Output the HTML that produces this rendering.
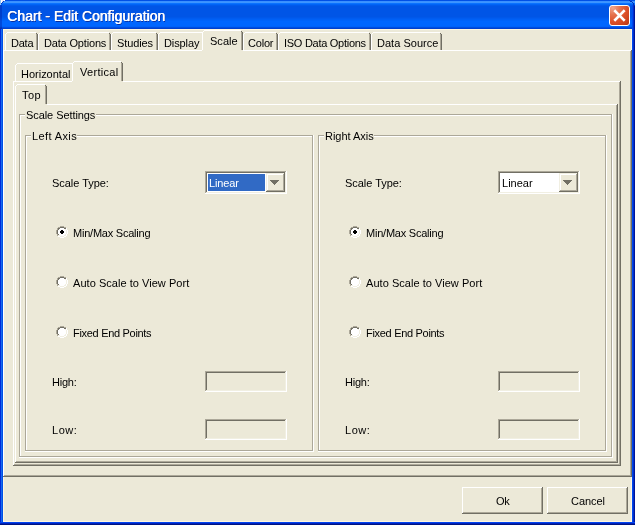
<!DOCTYPE html>
<html><head><meta charset="utf-8"><style>
html,body{margin:0;padding:0;width:635px;height:525px;overflow:hidden;background:#0050E6;}
div,span,svg{position:absolute;}
.t{font-family:"Liberation Sans",sans-serif;white-space:nowrap;line-height:13px;will-change:transform;}
.title{left:0;top:0;width:635px;height:29px;
background:linear-gradient(to bottom,#0050E6 0px,#0050E6 1px,#3A90FE 1px,#3A90FE 2px,#3D95FF 2px,#3D95FF 3px,#0A72FF 3px,#0A72FF 4px,#0064F6 4px,#0064F6 5px,#005AEC 5px,#005AEC 6px,#0055E6 6px,#0055E6 7px,#0055E6 7px,#0055E6 8px,#0055E6 8px,#0055E6 9px,#0055E6 9px,#0055E6 10px,#0055E6 10px,#0055E6 11px,#0055E6 11px,#0055E6 12px,#0055E6 12px,#0055E6 13px,#0055E6 13px,#0055E6 14px,#0055E6 14px,#0055E6 15px,#0055E6 15px,#0055E6 16px,#0055E6 16px,#0055E6 17px,#0058EA 17px,#0058EA 18px,#005CF0 18px,#005CF0 19px,#0060F5 19px,#0060F5 20px,#0063FA 20px,#0063FA 21px,#0066FF 21px,#0066FF 22px,#0066FF 22px,#0066FF 23px,#0066FF 23px,#0066FF 24px,#0066FF 24px,#0066FF 25px,#0066FF 25px,#0066FF 26px,#0062FA 26px,#0062FA 27px,#004EE0 27px,#004EE0 28px,#0040CF 28px,#0040CF 29px);}
.close{left:609px;top:5px;width:19px;height:19px;border:1px solid #fff;border-radius:3px;
background:radial-gradient(circle at 15% 10%,#F0A58C 0,#E5714C 30%,#DC5028 60%,#C8401A 85%,#B5350F 100%);}
.close svg{left:-1px;top:-1px;}
</style></head><body>
<div class="title"></div>
<div style="left:0px;top:5px;width:2px;height:24px;background:rgba(0,20,150,0.35);"></div>
<div style="left:0px;top:29px;width:3px;height:496px;background:linear-gradient(to right,#0029D8 0,#0029D8 1px,#166AEE 1px,#166AEE 2px,#0050E6 2px);"></div>
<div style="left:632px;top:5px;width:3px;height:520px;background:linear-gradient(to right,#0048F0 0,#0048F0 1px,#0030C8 1px,#0030C8 2px,#00139A 2px);"></div>
<div style="left:0px;top:0px;width:1px;height:1px;background:#8EC2F5;"></div>
<div style="left:1px;top:0px;width:1px;height:1px;background:#FFFFFF;"></div>
<div style="left:2px;top:0px;width:1px;height:1px;background:#F4E4F4;"></div>
<div style="left:3px;top:0px;width:1px;height:1px;background:#DDEEFF;"></div>
<div style="left:4px;top:0px;width:1px;height:1px;background:#FFFFFF;"></div>
<div style="left:0px;top:1px;width:1px;height:1px;background:#8EC2F5;"></div>
<div style="left:1px;top:1px;width:1px;height:1px;background:#FFFFFF;"></div>
<div style="left:2px;top:1px;width:1px;height:1px;background:#C8D8F8;"></div>
<div style="left:0px;top:2px;width:1px;height:1px;background:#8EC2F5;"></div>
<div style="left:1px;top:2px;width:1px;height:1px;background:#FFFFFF;"></div>
<div style="left:0px;top:3px;width:1px;height:1px;background:#8EC2F5;"></div>
<div style="left:0px;top:4px;width:1px;height:1px;background:#8EC2F5;"></div>
<div style="left:2px;top:2px;width:1px;height:1px;background:#0035C8;"></div>
<div style="left:3px;top:1px;width:1px;height:1px;background:#0035C8;"></div>
<div style="left:1px;top:3px;width:1px;height:1px;background:#0035C8;"></div>
<div style="left:5px;top:0px;width:1px;height:1px;background:#0040D8;"></div>
<div style="left:0px;top:5px;width:1px;height:1px;background:#0040D8;"></div>
<div style="left:629px;top:0px;width:1px;height:1px;background:#0030B8;"></div>
<div style="left:630px;top:1px;width:1px;height:1px;background:#0030B8;"></div>
<div style="left:631px;top:1px;width:1px;height:1px;background:#0030B8;"></div>
<div style="left:632px;top:2px;width:1px;height:1px;background:#0030B8;"></div>
<div style="left:633px;top:3px;width:1px;height:1px;background:#0030B8;"></div>
<div style="left:633px;top:4px;width:1px;height:1px;background:#0030B8;"></div>
<div style="left:634px;top:5px;width:1px;height:1px;background:#0030B8;"></div>
<div style="left:0px;top:522px;width:635px;height:3px;background:linear-gradient(to bottom,#0044F0 0,#0044F0 1px,#0022BB 1px,#0022BB 2px,#001480 2px);"></div>
<div style="left:3px;top:29px;width:629px;height:493px;background:#ECE9D8;"></div>
<div style="left:3px;top:29px;width:629px;height:1px;background:#FFF6DF;"></div>
<div style="left:3px;top:521px;width:629px;height:1px;background:#FFF6DF;"></div>
<div style="left:3px;top:29px;width:1px;height:493px;background:#FFF6DF;"></div>
<div style="left:631px;top:29px;width:1px;height:493px;background:#FFF6DF;"></div>
<div class="close"><svg width="21" height="21" viewBox="0 0 21 21"><path d="M6.2 6.2 L14.8 14.8 M14.8 6.2 L6.2 14.8" stroke="#fff" stroke-width="2.6" stroke-linecap="square"/></svg></div>
<div style="left:3px;top:50px;width:629px;height:1px;background:#FFFFFF;"></div>
<div style="left:3px;top:50px;width:1px;height:427px;background:#FFFFFF;"></div>
<div style="left:4px;top:475px;width:627px;height:1px;background:#ACA899;"></div>
<div style="left:3px;top:476px;width:629px;height:1px;background:#716F64;"></div>
<div style="left:630px;top:51px;width:1px;height:425px;background:#ACA899;"></div>
<div style="left:631px;top:50px;width:1px;height:427px;background:#716F64;"></div>
<div style="left:5px;top:32px;width:33px;height:18px;background:#ECE9D8;"></div>
<div style="left:7px;top:32px;width:29px;height:1px;background:#FFFFFF;"></div>
<div style="left:6px;top:33px;width:1px;height:1px;background:#FFFFFF;"></div>
<div style="left:5px;top:34px;width:1px;height:16px;background:#FFFFFF;"></div>
<div style="left:36px;top:33px;width:1px;height:1px;background:#716F64;"></div>
<div style="left:36px;top:34px;width:1px;height:16px;background:#ACA899;"></div>
<div style="left:37px;top:34px;width:1px;height:16px;background:#716F64;"></div>
<div style="left:38px;top:32px;width:73px;height:18px;background:#ECE9D8;"></div>
<div style="left:40px;top:32px;width:69px;height:1px;background:#FFFFFF;"></div>
<div style="left:39px;top:33px;width:1px;height:1px;background:#FFFFFF;"></div>
<div style="left:38px;top:34px;width:1px;height:16px;background:#FFFFFF;"></div>
<div style="left:109px;top:33px;width:1px;height:1px;background:#716F64;"></div>
<div style="left:109px;top:34px;width:1px;height:16px;background:#ACA899;"></div>
<div style="left:110px;top:34px;width:1px;height:16px;background:#716F64;"></div>
<div style="left:111px;top:32px;width:47px;height:18px;background:#ECE9D8;"></div>
<div style="left:113px;top:32px;width:43px;height:1px;background:#FFFFFF;"></div>
<div style="left:112px;top:33px;width:1px;height:1px;background:#FFFFFF;"></div>
<div style="left:111px;top:34px;width:1px;height:16px;background:#FFFFFF;"></div>
<div style="left:156px;top:33px;width:1px;height:1px;background:#716F64;"></div>
<div style="left:156px;top:34px;width:1px;height:16px;background:#ACA899;"></div>
<div style="left:157px;top:34px;width:1px;height:16px;background:#716F64;"></div>
<div style="left:158px;top:32px;width:44px;height:18px;background:#ECE9D8;"></div>
<div style="left:160px;top:32px;width:42px;height:1px;background:#FFFFFF;"></div>
<div style="left:159px;top:33px;width:1px;height:1px;background:#FFFFFF;"></div>
<div style="left:158px;top:34px;width:1px;height:16px;background:#FFFFFF;"></div>
<div style="left:243px;top:32px;width:35px;height:18px;background:#ECE9D8;"></div>
<div style="left:245px;top:32px;width:31px;height:1px;background:#FFFFFF;"></div>
<div style="left:244px;top:33px;width:1px;height:1px;background:#FFFFFF;"></div>
<div style="left:243px;top:34px;width:1px;height:16px;background:#FFFFFF;"></div>
<div style="left:276px;top:33px;width:1px;height:1px;background:#716F64;"></div>
<div style="left:276px;top:34px;width:1px;height:16px;background:#ACA899;"></div>
<div style="left:277px;top:34px;width:1px;height:16px;background:#716F64;"></div>
<div style="left:278px;top:32px;width:93px;height:18px;background:#ECE9D8;"></div>
<div style="left:280px;top:32px;width:89px;height:1px;background:#FFFFFF;"></div>
<div style="left:279px;top:33px;width:1px;height:1px;background:#FFFFFF;"></div>
<div style="left:278px;top:34px;width:1px;height:16px;background:#FFFFFF;"></div>
<div style="left:369px;top:33px;width:1px;height:1px;background:#716F64;"></div>
<div style="left:369px;top:34px;width:1px;height:16px;background:#ACA899;"></div>
<div style="left:370px;top:34px;width:1px;height:16px;background:#716F64;"></div>
<div style="left:371px;top:32px;width:71px;height:18px;background:#ECE9D8;"></div>
<div style="left:373px;top:32px;width:67px;height:1px;background:#FFFFFF;"></div>
<div style="left:372px;top:33px;width:1px;height:1px;background:#FFFFFF;"></div>
<div style="left:371px;top:34px;width:1px;height:16px;background:#FFFFFF;"></div>
<div style="left:440px;top:33px;width:1px;height:1px;background:#716F64;"></div>
<div style="left:440px;top:34px;width:1px;height:16px;background:#ACA899;"></div>
<div style="left:441px;top:34px;width:1px;height:16px;background:#716F64;"></div>
<div style="left:202px;top:30px;width:41px;height:21px;background:#ECE9D8;"></div>
<div style="left:204px;top:30px;width:37px;height:1px;background:#FFFFFF;"></div>
<div style="left:203px;top:31px;width:1px;height:1px;background:#FFFFFF;"></div>
<div style="left:202px;top:32px;width:1px;height:18px;background:#FFFFFF;"></div>
<div style="left:241px;top:31px;width:1px;height:1px;background:#716F64;"></div>
<div style="left:241px;top:32px;width:1px;height:18px;background:#ACA899;"></div>
<div style="left:242px;top:32px;width:1px;height:18px;background:#716F64;"></div>
<div style="left:13px;top:81px;width:608px;height:1px;background:#FFFFFF;"></div>
<div style="left:13px;top:81px;width:1px;height:385px;background:#FFFFFF;"></div>
<div style="left:14px;top:464px;width:606px;height:1px;background:#ACA899;"></div>
<div style="left:13px;top:465px;width:608px;height:1px;background:#716F64;"></div>
<div style="left:619px;top:82px;width:1px;height:383px;background:#ACA899;"></div>
<div style="left:620px;top:81px;width:1px;height:385px;background:#716F64;"></div>
<div style="left:15px;top:63px;width:57px;height:18px;background:#ECE9D8;"></div>
<div style="left:17px;top:63px;width:55px;height:1px;background:#FFFFFF;"></div>
<div style="left:16px;top:64px;width:1px;height:1px;background:#FFFFFF;"></div>
<div style="left:15px;top:65px;width:1px;height:16px;background:#FFFFFF;"></div>
<div style="left:72px;top:61px;width:51px;height:21px;background:#ECE9D8;"></div>
<div style="left:74px;top:61px;width:47px;height:1px;background:#FFFFFF;"></div>
<div style="left:73px;top:62px;width:1px;height:1px;background:#FFFFFF;"></div>
<div style="left:72px;top:63px;width:1px;height:18px;background:#FFFFFF;"></div>
<div style="left:121px;top:62px;width:1px;height:1px;background:#716F64;"></div>
<div style="left:121px;top:63px;width:1px;height:18px;background:#ACA899;"></div>
<div style="left:122px;top:63px;width:1px;height:18px;background:#716F64;"></div>
<div style="left:15px;top:104px;width:603px;height:1px;background:#FFFFFF;"></div>
<div style="left:15px;top:104px;width:1px;height:359px;background:#FFFFFF;"></div>
<div style="left:16px;top:461px;width:601px;height:1px;background:#ACA899;"></div>
<div style="left:15px;top:462px;width:603px;height:1px;background:#716F64;"></div>
<div style="left:616px;top:105px;width:1px;height:357px;background:#ACA899;"></div>
<div style="left:617px;top:104px;width:1px;height:359px;background:#716F64;"></div>
<div style="left:15px;top:84px;width:32px;height:21px;background:#ECE9D8;"></div>
<div style="left:17px;top:84px;width:28px;height:1px;background:#FFFFFF;"></div>
<div style="left:16px;top:85px;width:1px;height:1px;background:#FFFFFF;"></div>
<div style="left:15px;top:86px;width:1px;height:18px;background:#FFFFFF;"></div>
<div style="left:45px;top:85px;width:1px;height:1px;background:#716F64;"></div>
<div style="left:45px;top:86px;width:1px;height:18px;background:#ACA899;"></div>
<div style="left:46px;top:86px;width:1px;height:18px;background:#716F64;"></div>
<div style="left:15px;top:104px;width:1px;height:1px;background:#FFFFFF;"></div>
<div style="left:20px;top:115px;width:5px;height:1px;background:#FFFFFF;"></div>
<div style="left:96px;top:115px;width:515px;height:1px;background:#FFFFFF;"></div>
<div style="left:20px;top:115px;width:1px;height:341px;background:#FFFFFF;"></div>
<div style="left:19px;top:457px;width:594px;height:1px;background:#FFFFFF;"></div>
<div style="left:612px;top:114px;width:1px;height:344px;background:#FFFFFF;"></div>
<div style="left:19px;top:114px;width:6px;height:1px;background:#ACA899;"></div>
<div style="left:96px;top:114px;width:516px;height:1px;background:#ACA899;"></div>
<div style="left:19px;top:114px;width:1px;height:343px;background:#ACA899;"></div>
<div style="left:19px;top:456px;width:593px;height:1px;background:#ACA899;"></div>
<div style="left:611px;top:114px;width:1px;height:343px;background:#ACA899;"></div>
<div style="left:26px;top:136px;width:5px;height:1px;background:#FFFFFF;"></div>
<div style="left:77px;top:136px;width:235px;height:1px;background:#FFFFFF;"></div>
<div style="left:26px;top:136px;width:1px;height:314px;background:#FFFFFF;"></div>
<div style="left:25px;top:451px;width:289px;height:1px;background:#FFFFFF;"></div>
<div style="left:313px;top:135px;width:1px;height:317px;background:#FFFFFF;"></div>
<div style="left:25px;top:135px;width:6px;height:1px;background:#ACA899;"></div>
<div style="left:77px;top:135px;width:236px;height:1px;background:#ACA899;"></div>
<div style="left:25px;top:135px;width:1px;height:316px;background:#ACA899;"></div>
<div style="left:25px;top:450px;width:288px;height:1px;background:#ACA899;"></div>
<div style="left:312px;top:135px;width:1px;height:316px;background:#ACA899;"></div>
<div style="left:319px;top:136px;width:5px;height:1px;background:#FFFFFF;"></div>
<div style="left:374px;top:136px;width:231px;height:1px;background:#FFFFFF;"></div>
<div style="left:319px;top:136px;width:1px;height:314px;background:#FFFFFF;"></div>
<div style="left:318px;top:451px;width:289px;height:1px;background:#FFFFFF;"></div>
<div style="left:606px;top:135px;width:1px;height:317px;background:#FFFFFF;"></div>
<div style="left:318px;top:135px;width:6px;height:1px;background:#ACA899;"></div>
<div style="left:374px;top:135px;width:232px;height:1px;background:#ACA899;"></div>
<div style="left:318px;top:135px;width:1px;height:316px;background:#ACA899;"></div>
<div style="left:318px;top:450px;width:288px;height:1px;background:#ACA899;"></div>
<div style="left:605px;top:135px;width:1px;height:316px;background:#ACA899;"></div>
<span class="t" style="left:51.76px;top:177px;font-size:11px;font-weight:normal;color:#000;letter-spacing:-0.036px">Scale Type:</span>
<div style="left:205px;top:171px;width:82px;height:23px;background:#FFFFFF;"></div>
<div style="left:205px;top:171px;width:81px;height:1px;background:#ACA899;"></div>
<div style="left:205px;top:171px;width:1px;height:22px;background:#ACA899;"></div>
<div style="left:206px;top:172px;width:79px;height:1px;background:#716F64;"></div>
<div style="left:206px;top:172px;width:1px;height:20px;background:#716F64;"></div>
<div style="left:205px;top:193px;width:82px;height:1px;background:#FFFFFF;"></div>
<div style="left:286px;top:171px;width:1px;height:23px;background:#FFFFFF;"></div>
<div style="left:206px;top:192px;width:80px;height:1px;background:#F1EFE2;"></div>
<div style="left:285px;top:172px;width:1px;height:21px;background:#F1EFE2;"></div>
<div style="left:208px;top:174px;width:57px;height:17px;background:#316AC5;"></div>
<span class="t" style="left:208.75px;top:177px;font-size:11px;font-weight:normal;color:#fff;letter-spacing:-0.115px">Linear</span>
<div style="left:266px;top:173px;width:19px;height:19px;background:#ECE9D8;"></div>
<div style="left:266px;top:173px;width:18px;height:1px;background:#F1EFE2;"></div>
<div style="left:266px;top:173px;width:1px;height:18px;background:#F1EFE2;"></div>
<div style="left:267px;top:174px;width:16px;height:1px;background:#FFFFFF;"></div>
<div style="left:267px;top:174px;width:1px;height:16px;background:#FFFFFF;"></div>
<div style="left:267px;top:190px;width:17px;height:1px;background:#ACA899;"></div>
<div style="left:283px;top:174px;width:1px;height:17px;background:#ACA899;"></div>
<div style="left:266px;top:191px;width:19px;height:1px;background:#716F64;"></div>
<div style="left:284px;top:173px;width:1px;height:19px;background:#716F64;"></div>
<div style="left:270px;top:180px;width:9px;height:1px;background:#716F64;"></div>
<div style="left:271px;top:181px;width:7px;height:1px;background:#716F64;"></div>
<div style="left:272px;top:182px;width:5px;height:1px;background:#716F64;"></div>
<div style="left:273px;top:183px;width:3px;height:1px;background:#716F64;"></div>
<div style="left:274px;top:184px;width:1px;height:1px;background:#716F64;"></div>
<svg style="position:absolute;left:56px;top:226px" width="12" height="12" shape-rendering="crispEdges"><rect x="4" y="0" width="1" height="1" fill="#ACA899"/><rect x="5" y="0" width="1" height="1" fill="#ACA899"/><rect x="6" y="0" width="1" height="1" fill="#ACA899"/><rect x="7" y="0" width="1" height="1" fill="#ACA899"/><rect x="2" y="1" width="1" height="1" fill="#ACA899"/><rect x="3" y="1" width="1" height="1" fill="#ACA899"/><rect x="4" y="1" width="1" height="1" fill="#716F64"/><rect x="5" y="1" width="1" height="1" fill="#716F64"/><rect x="6" y="1" width="1" height="1" fill="#716F64"/><rect x="7" y="1" width="1" height="1" fill="#716F64"/><rect x="8" y="1" width="1" height="1" fill="#ACA899"/><rect x="9" y="1" width="1" height="1" fill="#ACA899"/><rect x="1" y="2" width="1" height="1" fill="#ACA899"/><rect x="2" y="2" width="1" height="1" fill="#716F64"/><rect x="3" y="2" width="1" height="1" fill="#716F64"/><rect x="4" y="2" width="1" height="1" fill="#FFFFFF"/><rect x="5" y="2" width="1" height="1" fill="#FFFFFF"/><rect x="6" y="2" width="1" height="1" fill="#FFFFFF"/><rect x="7" y="2" width="1" height="1" fill="#FFFFFF"/><rect x="8" y="2" width="1" height="1" fill="#716F64"/><rect x="9" y="2" width="1" height="1" fill="#716F64"/><rect x="10" y="2" width="1" height="1" fill="#FFFFFF"/><rect x="1" y="3" width="1" height="1" fill="#ACA899"/><rect x="2" y="3" width="1" height="1" fill="#716F64"/><rect x="3" y="3" width="1" height="1" fill="#FFFFFF"/><rect x="4" y="3" width="1" height="1" fill="#FFFFFF"/><rect x="5" y="3" width="1" height="1" fill="#FFFFFF"/><rect x="6" y="3" width="1" height="1" fill="#FFFFFF"/><rect x="7" y="3" width="1" height="1" fill="#FFFFFF"/><rect x="8" y="3" width="1" height="1" fill="#FFFFFF"/><rect x="9" y="3" width="1" height="1" fill="#F1EFE2"/><rect x="10" y="3" width="1" height="1" fill="#FFFFFF"/><rect x="0" y="4" width="1" height="1" fill="#ACA899"/><rect x="1" y="4" width="1" height="1" fill="#716F64"/><rect x="2" y="4" width="1" height="1" fill="#FFFFFF"/><rect x="3" y="4" width="1" height="1" fill="#FFFFFF"/><rect x="4" y="4" width="1" height="1" fill="#FFFFFF"/><rect x="5" y="4" width="1" height="1" fill="#FFFFFF"/><rect x="6" y="4" width="1" height="1" fill="#FFFFFF"/><rect x="7" y="4" width="1" height="1" fill="#FFFFFF"/><rect x="8" y="4" width="1" height="1" fill="#FFFFFF"/><rect x="9" y="4" width="1" height="1" fill="#FFFFFF"/><rect x="10" y="4" width="1" height="1" fill="#F1EFE2"/><rect x="11" y="4" width="1" height="1" fill="#FFFFFF"/><rect x="0" y="5" width="1" height="1" fill="#ACA899"/><rect x="1" y="5" width="1" height="1" fill="#716F64"/><rect x="2" y="5" width="1" height="1" fill="#FFFFFF"/><rect x="3" y="5" width="1" height="1" fill="#FFFFFF"/><rect x="4" y="5" width="1" height="1" fill="#FFFFFF"/><rect x="5" y="5" width="1" height="1" fill="#FFFFFF"/><rect x="6" y="5" width="1" height="1" fill="#FFFFFF"/><rect x="7" y="5" width="1" height="1" fill="#FFFFFF"/><rect x="8" y="5" width="1" height="1" fill="#FFFFFF"/><rect x="9" y="5" width="1" height="1" fill="#FFFFFF"/><rect x="10" y="5" width="1" height="1" fill="#F1EFE2"/><rect x="11" y="5" width="1" height="1" fill="#FFFFFF"/><rect x="0" y="6" width="1" height="1" fill="#ACA899"/><rect x="1" y="6" width="1" height="1" fill="#716F64"/><rect x="2" y="6" width="1" height="1" fill="#FFFFFF"/><rect x="3" y="6" width="1" height="1" fill="#FFFFFF"/><rect x="4" y="6" width="1" height="1" fill="#FFFFFF"/><rect x="5" y="6" width="1" height="1" fill="#FFFFFF"/><rect x="6" y="6" width="1" height="1" fill="#FFFFFF"/><rect x="7" y="6" width="1" height="1" fill="#FFFFFF"/><rect x="8" y="6" width="1" height="1" fill="#FFFFFF"/><rect x="9" y="6" width="1" height="1" fill="#FFFFFF"/><rect x="10" y="6" width="1" height="1" fill="#F1EFE2"/><rect x="11" y="6" width="1" height="1" fill="#FFFFFF"/><rect x="0" y="7" width="1" height="1" fill="#ACA899"/><rect x="1" y="7" width="1" height="1" fill="#716F64"/><rect x="2" y="7" width="1" height="1" fill="#FFFFFF"/><rect x="3" y="7" width="1" height="1" fill="#FFFFFF"/><rect x="4" y="7" width="1" height="1" fill="#FFFFFF"/><rect x="5" y="7" width="1" height="1" fill="#FFFFFF"/><rect x="6" y="7" width="1" height="1" fill="#FFFFFF"/><rect x="7" y="7" width="1" height="1" fill="#FFFFFF"/><rect x="8" y="7" width="1" height="1" fill="#FFFFFF"/><rect x="9" y="7" width="1" height="1" fill="#FFFFFF"/><rect x="10" y="7" width="1" height="1" fill="#F1EFE2"/><rect x="11" y="7" width="1" height="1" fill="#FFFFFF"/><rect x="1" y="8" width="1" height="1" fill="#ACA899"/><rect x="2" y="8" width="1" height="1" fill="#716F64"/><rect x="3" y="8" width="1" height="1" fill="#FFFFFF"/><rect x="4" y="8" width="1" height="1" fill="#FFFFFF"/><rect x="5" y="8" width="1" height="1" fill="#FFFFFF"/><rect x="6" y="8" width="1" height="1" fill="#FFFFFF"/><rect x="7" y="8" width="1" height="1" fill="#FFFFFF"/><rect x="8" y="8" width="1" height="1" fill="#FFFFFF"/><rect x="9" y="8" width="1" height="1" fill="#F1EFE2"/><rect x="10" y="8" width="1" height="1" fill="#FFFFFF"/><rect x="1" y="9" width="1" height="1" fill="#ACA899"/><rect x="2" y="9" width="1" height="1" fill="#F1EFE2"/><rect x="3" y="9" width="1" height="1" fill="#F1EFE2"/><rect x="4" y="9" width="1" height="1" fill="#FFFFFF"/><rect x="5" y="9" width="1" height="1" fill="#FFFFFF"/><rect x="6" y="9" width="1" height="1" fill="#FFFFFF"/><rect x="7" y="9" width="1" height="1" fill="#FFFFFF"/><rect x="8" y="9" width="1" height="1" fill="#F1EFE2"/><rect x="9" y="9" width="1" height="1" fill="#F1EFE2"/><rect x="10" y="9" width="1" height="1" fill="#FFFFFF"/><rect x="2" y="10" width="1" height="1" fill="#FFFFFF"/><rect x="3" y="10" width="1" height="1" fill="#FFFFFF"/><rect x="4" y="10" width="1" height="1" fill="#F1EFE2"/><rect x="5" y="10" width="1" height="1" fill="#F1EFE2"/><rect x="6" y="10" width="1" height="1" fill="#F1EFE2"/><rect x="7" y="10" width="1" height="1" fill="#F1EFE2"/><rect x="8" y="10" width="1" height="1" fill="#FFFFFF"/><rect x="9" y="10" width="1" height="1" fill="#FFFFFF"/><rect x="4" y="11" width="1" height="1" fill="#FFFFFF"/><rect x="5" y="11" width="1" height="1" fill="#FFFFFF"/><rect x="6" y="11" width="1" height="1" fill="#FFFFFF"/><rect x="7" y="11" width="1" height="1" fill="#FFFFFF"/><rect x="5" y="4" width="1" height="1" fill="#000"/><rect x="6" y="4" width="1" height="1" fill="#000"/><rect x="4" y="5" width="1" height="1" fill="#000"/><rect x="5" y="5" width="1" height="1" fill="#000"/><rect x="6" y="5" width="1" height="1" fill="#000"/><rect x="7" y="5" width="1" height="1" fill="#000"/><rect x="4" y="6" width="1" height="1" fill="#000"/><rect x="5" y="6" width="1" height="1" fill="#000"/><rect x="6" y="6" width="1" height="1" fill="#000"/><rect x="7" y="6" width="1" height="1" fill="#000"/><rect x="5" y="7" width="1" height="1" fill="#000"/><rect x="6" y="7" width="1" height="1" fill="#000"/></svg>
<span class="t" style="left:72.95px;top:227px;font-size:11px;font-weight:normal;color:#000;letter-spacing:-0.223px">Min/Max Scaling</span>
<svg style="position:absolute;left:56px;top:276px" width="12" height="12" shape-rendering="crispEdges"><rect x="4" y="0" width="1" height="1" fill="#ACA899"/><rect x="5" y="0" width="1" height="1" fill="#ACA899"/><rect x="6" y="0" width="1" height="1" fill="#ACA899"/><rect x="7" y="0" width="1" height="1" fill="#ACA899"/><rect x="2" y="1" width="1" height="1" fill="#ACA899"/><rect x="3" y="1" width="1" height="1" fill="#ACA899"/><rect x="4" y="1" width="1" height="1" fill="#716F64"/><rect x="5" y="1" width="1" height="1" fill="#716F64"/><rect x="6" y="1" width="1" height="1" fill="#716F64"/><rect x="7" y="1" width="1" height="1" fill="#716F64"/><rect x="8" y="1" width="1" height="1" fill="#ACA899"/><rect x="9" y="1" width="1" height="1" fill="#ACA899"/><rect x="1" y="2" width="1" height="1" fill="#ACA899"/><rect x="2" y="2" width="1" height="1" fill="#716F64"/><rect x="3" y="2" width="1" height="1" fill="#716F64"/><rect x="4" y="2" width="1" height="1" fill="#FFFFFF"/><rect x="5" y="2" width="1" height="1" fill="#FFFFFF"/><rect x="6" y="2" width="1" height="1" fill="#FFFFFF"/><rect x="7" y="2" width="1" height="1" fill="#FFFFFF"/><rect x="8" y="2" width="1" height="1" fill="#716F64"/><rect x="9" y="2" width="1" height="1" fill="#716F64"/><rect x="10" y="2" width="1" height="1" fill="#FFFFFF"/><rect x="1" y="3" width="1" height="1" fill="#ACA899"/><rect x="2" y="3" width="1" height="1" fill="#716F64"/><rect x="3" y="3" width="1" height="1" fill="#FFFFFF"/><rect x="4" y="3" width="1" height="1" fill="#FFFFFF"/><rect x="5" y="3" width="1" height="1" fill="#FFFFFF"/><rect x="6" y="3" width="1" height="1" fill="#FFFFFF"/><rect x="7" y="3" width="1" height="1" fill="#FFFFFF"/><rect x="8" y="3" width="1" height="1" fill="#FFFFFF"/><rect x="9" y="3" width="1" height="1" fill="#F1EFE2"/><rect x="10" y="3" width="1" height="1" fill="#FFFFFF"/><rect x="0" y="4" width="1" height="1" fill="#ACA899"/><rect x="1" y="4" width="1" height="1" fill="#716F64"/><rect x="2" y="4" width="1" height="1" fill="#FFFFFF"/><rect x="3" y="4" width="1" height="1" fill="#FFFFFF"/><rect x="4" y="4" width="1" height="1" fill="#FFFFFF"/><rect x="5" y="4" width="1" height="1" fill="#FFFFFF"/><rect x="6" y="4" width="1" height="1" fill="#FFFFFF"/><rect x="7" y="4" width="1" height="1" fill="#FFFFFF"/><rect x="8" y="4" width="1" height="1" fill="#FFFFFF"/><rect x="9" y="4" width="1" height="1" fill="#FFFFFF"/><rect x="10" y="4" width="1" height="1" fill="#F1EFE2"/><rect x="11" y="4" width="1" height="1" fill="#FFFFFF"/><rect x="0" y="5" width="1" height="1" fill="#ACA899"/><rect x="1" y="5" width="1" height="1" fill="#716F64"/><rect x="2" y="5" width="1" height="1" fill="#FFFFFF"/><rect x="3" y="5" width="1" height="1" fill="#FFFFFF"/><rect x="4" y="5" width="1" height="1" fill="#FFFFFF"/><rect x="5" y="5" width="1" height="1" fill="#FFFFFF"/><rect x="6" y="5" width="1" height="1" fill="#FFFFFF"/><rect x="7" y="5" width="1" height="1" fill="#FFFFFF"/><rect x="8" y="5" width="1" height="1" fill="#FFFFFF"/><rect x="9" y="5" width="1" height="1" fill="#FFFFFF"/><rect x="10" y="5" width="1" height="1" fill="#F1EFE2"/><rect x="11" y="5" width="1" height="1" fill="#FFFFFF"/><rect x="0" y="6" width="1" height="1" fill="#ACA899"/><rect x="1" y="6" width="1" height="1" fill="#716F64"/><rect x="2" y="6" width="1" height="1" fill="#FFFFFF"/><rect x="3" y="6" width="1" height="1" fill="#FFFFFF"/><rect x="4" y="6" width="1" height="1" fill="#FFFFFF"/><rect x="5" y="6" width="1" height="1" fill="#FFFFFF"/><rect x="6" y="6" width="1" height="1" fill="#FFFFFF"/><rect x="7" y="6" width="1" height="1" fill="#FFFFFF"/><rect x="8" y="6" width="1" height="1" fill="#FFFFFF"/><rect x="9" y="6" width="1" height="1" fill="#FFFFFF"/><rect x="10" y="6" width="1" height="1" fill="#F1EFE2"/><rect x="11" y="6" width="1" height="1" fill="#FFFFFF"/><rect x="0" y="7" width="1" height="1" fill="#ACA899"/><rect x="1" y="7" width="1" height="1" fill="#716F64"/><rect x="2" y="7" width="1" height="1" fill="#FFFFFF"/><rect x="3" y="7" width="1" height="1" fill="#FFFFFF"/><rect x="4" y="7" width="1" height="1" fill="#FFFFFF"/><rect x="5" y="7" width="1" height="1" fill="#FFFFFF"/><rect x="6" y="7" width="1" height="1" fill="#FFFFFF"/><rect x="7" y="7" width="1" height="1" fill="#FFFFFF"/><rect x="8" y="7" width="1" height="1" fill="#FFFFFF"/><rect x="9" y="7" width="1" height="1" fill="#FFFFFF"/><rect x="10" y="7" width="1" height="1" fill="#F1EFE2"/><rect x="11" y="7" width="1" height="1" fill="#FFFFFF"/><rect x="1" y="8" width="1" height="1" fill="#ACA899"/><rect x="2" y="8" width="1" height="1" fill="#716F64"/><rect x="3" y="8" width="1" height="1" fill="#FFFFFF"/><rect x="4" y="8" width="1" height="1" fill="#FFFFFF"/><rect x="5" y="8" width="1" height="1" fill="#FFFFFF"/><rect x="6" y="8" width="1" height="1" fill="#FFFFFF"/><rect x="7" y="8" width="1" height="1" fill="#FFFFFF"/><rect x="8" y="8" width="1" height="1" fill="#FFFFFF"/><rect x="9" y="8" width="1" height="1" fill="#F1EFE2"/><rect x="10" y="8" width="1" height="1" fill="#FFFFFF"/><rect x="1" y="9" width="1" height="1" fill="#ACA899"/><rect x="2" y="9" width="1" height="1" fill="#F1EFE2"/><rect x="3" y="9" width="1" height="1" fill="#F1EFE2"/><rect x="4" y="9" width="1" height="1" fill="#FFFFFF"/><rect x="5" y="9" width="1" height="1" fill="#FFFFFF"/><rect x="6" y="9" width="1" height="1" fill="#FFFFFF"/><rect x="7" y="9" width="1" height="1" fill="#FFFFFF"/><rect x="8" y="9" width="1" height="1" fill="#F1EFE2"/><rect x="9" y="9" width="1" height="1" fill="#F1EFE2"/><rect x="10" y="9" width="1" height="1" fill="#FFFFFF"/><rect x="2" y="10" width="1" height="1" fill="#FFFFFF"/><rect x="3" y="10" width="1" height="1" fill="#FFFFFF"/><rect x="4" y="10" width="1" height="1" fill="#F1EFE2"/><rect x="5" y="10" width="1" height="1" fill="#F1EFE2"/><rect x="6" y="10" width="1" height="1" fill="#F1EFE2"/><rect x="7" y="10" width="1" height="1" fill="#F1EFE2"/><rect x="8" y="10" width="1" height="1" fill="#FFFFFF"/><rect x="9" y="10" width="1" height="1" fill="#FFFFFF"/><rect x="4" y="11" width="1" height="1" fill="#FFFFFF"/><rect x="5" y="11" width="1" height="1" fill="#FFFFFF"/><rect x="6" y="11" width="1" height="1" fill="#FFFFFF"/><rect x="7" y="11" width="1" height="1" fill="#FFFFFF"/></svg>
<span class="t" style="left:73.07px;top:277px;font-size:11px;font-weight:normal;color:#000;letter-spacing:0.04px">Auto Scale to View Port</span>
<svg style="position:absolute;left:56px;top:326px" width="12" height="12" shape-rendering="crispEdges"><rect x="4" y="0" width="1" height="1" fill="#ACA899"/><rect x="5" y="0" width="1" height="1" fill="#ACA899"/><rect x="6" y="0" width="1" height="1" fill="#ACA899"/><rect x="7" y="0" width="1" height="1" fill="#ACA899"/><rect x="2" y="1" width="1" height="1" fill="#ACA899"/><rect x="3" y="1" width="1" height="1" fill="#ACA899"/><rect x="4" y="1" width="1" height="1" fill="#716F64"/><rect x="5" y="1" width="1" height="1" fill="#716F64"/><rect x="6" y="1" width="1" height="1" fill="#716F64"/><rect x="7" y="1" width="1" height="1" fill="#716F64"/><rect x="8" y="1" width="1" height="1" fill="#ACA899"/><rect x="9" y="1" width="1" height="1" fill="#ACA899"/><rect x="1" y="2" width="1" height="1" fill="#ACA899"/><rect x="2" y="2" width="1" height="1" fill="#716F64"/><rect x="3" y="2" width="1" height="1" fill="#716F64"/><rect x="4" y="2" width="1" height="1" fill="#FFFFFF"/><rect x="5" y="2" width="1" height="1" fill="#FFFFFF"/><rect x="6" y="2" width="1" height="1" fill="#FFFFFF"/><rect x="7" y="2" width="1" height="1" fill="#FFFFFF"/><rect x="8" y="2" width="1" height="1" fill="#716F64"/><rect x="9" y="2" width="1" height="1" fill="#716F64"/><rect x="10" y="2" width="1" height="1" fill="#FFFFFF"/><rect x="1" y="3" width="1" height="1" fill="#ACA899"/><rect x="2" y="3" width="1" height="1" fill="#716F64"/><rect x="3" y="3" width="1" height="1" fill="#FFFFFF"/><rect x="4" y="3" width="1" height="1" fill="#FFFFFF"/><rect x="5" y="3" width="1" height="1" fill="#FFFFFF"/><rect x="6" y="3" width="1" height="1" fill="#FFFFFF"/><rect x="7" y="3" width="1" height="1" fill="#FFFFFF"/><rect x="8" y="3" width="1" height="1" fill="#FFFFFF"/><rect x="9" y="3" width="1" height="1" fill="#F1EFE2"/><rect x="10" y="3" width="1" height="1" fill="#FFFFFF"/><rect x="0" y="4" width="1" height="1" fill="#ACA899"/><rect x="1" y="4" width="1" height="1" fill="#716F64"/><rect x="2" y="4" width="1" height="1" fill="#FFFFFF"/><rect x="3" y="4" width="1" height="1" fill="#FFFFFF"/><rect x="4" y="4" width="1" height="1" fill="#FFFFFF"/><rect x="5" y="4" width="1" height="1" fill="#FFFFFF"/><rect x="6" y="4" width="1" height="1" fill="#FFFFFF"/><rect x="7" y="4" width="1" height="1" fill="#FFFFFF"/><rect x="8" y="4" width="1" height="1" fill="#FFFFFF"/><rect x="9" y="4" width="1" height="1" fill="#FFFFFF"/><rect x="10" y="4" width="1" height="1" fill="#F1EFE2"/><rect x="11" y="4" width="1" height="1" fill="#FFFFFF"/><rect x="0" y="5" width="1" height="1" fill="#ACA899"/><rect x="1" y="5" width="1" height="1" fill="#716F64"/><rect x="2" y="5" width="1" height="1" fill="#FFFFFF"/><rect x="3" y="5" width="1" height="1" fill="#FFFFFF"/><rect x="4" y="5" width="1" height="1" fill="#FFFFFF"/><rect x="5" y="5" width="1" height="1" fill="#FFFFFF"/><rect x="6" y="5" width="1" height="1" fill="#FFFFFF"/><rect x="7" y="5" width="1" height="1" fill="#FFFFFF"/><rect x="8" y="5" width="1" height="1" fill="#FFFFFF"/><rect x="9" y="5" width="1" height="1" fill="#FFFFFF"/><rect x="10" y="5" width="1" height="1" fill="#F1EFE2"/><rect x="11" y="5" width="1" height="1" fill="#FFFFFF"/><rect x="0" y="6" width="1" height="1" fill="#ACA899"/><rect x="1" y="6" width="1" height="1" fill="#716F64"/><rect x="2" y="6" width="1" height="1" fill="#FFFFFF"/><rect x="3" y="6" width="1" height="1" fill="#FFFFFF"/><rect x="4" y="6" width="1" height="1" fill="#FFFFFF"/><rect x="5" y="6" width="1" height="1" fill="#FFFFFF"/><rect x="6" y="6" width="1" height="1" fill="#FFFFFF"/><rect x="7" y="6" width="1" height="1" fill="#FFFFFF"/><rect x="8" y="6" width="1" height="1" fill="#FFFFFF"/><rect x="9" y="6" width="1" height="1" fill="#FFFFFF"/><rect x="10" y="6" width="1" height="1" fill="#F1EFE2"/><rect x="11" y="6" width="1" height="1" fill="#FFFFFF"/><rect x="0" y="7" width="1" height="1" fill="#ACA899"/><rect x="1" y="7" width="1" height="1" fill="#716F64"/><rect x="2" y="7" width="1" height="1" fill="#FFFFFF"/><rect x="3" y="7" width="1" height="1" fill="#FFFFFF"/><rect x="4" y="7" width="1" height="1" fill="#FFFFFF"/><rect x="5" y="7" width="1" height="1" fill="#FFFFFF"/><rect x="6" y="7" width="1" height="1" fill="#FFFFFF"/><rect x="7" y="7" width="1" height="1" fill="#FFFFFF"/><rect x="8" y="7" width="1" height="1" fill="#FFFFFF"/><rect x="9" y="7" width="1" height="1" fill="#FFFFFF"/><rect x="10" y="7" width="1" height="1" fill="#F1EFE2"/><rect x="11" y="7" width="1" height="1" fill="#FFFFFF"/><rect x="1" y="8" width="1" height="1" fill="#ACA899"/><rect x="2" y="8" width="1" height="1" fill="#716F64"/><rect x="3" y="8" width="1" height="1" fill="#FFFFFF"/><rect x="4" y="8" width="1" height="1" fill="#FFFFFF"/><rect x="5" y="8" width="1" height="1" fill="#FFFFFF"/><rect x="6" y="8" width="1" height="1" fill="#FFFFFF"/><rect x="7" y="8" width="1" height="1" fill="#FFFFFF"/><rect x="8" y="8" width="1" height="1" fill="#FFFFFF"/><rect x="9" y="8" width="1" height="1" fill="#F1EFE2"/><rect x="10" y="8" width="1" height="1" fill="#FFFFFF"/><rect x="1" y="9" width="1" height="1" fill="#ACA899"/><rect x="2" y="9" width="1" height="1" fill="#F1EFE2"/><rect x="3" y="9" width="1" height="1" fill="#F1EFE2"/><rect x="4" y="9" width="1" height="1" fill="#FFFFFF"/><rect x="5" y="9" width="1" height="1" fill="#FFFFFF"/><rect x="6" y="9" width="1" height="1" fill="#FFFFFF"/><rect x="7" y="9" width="1" height="1" fill="#FFFFFF"/><rect x="8" y="9" width="1" height="1" fill="#F1EFE2"/><rect x="9" y="9" width="1" height="1" fill="#F1EFE2"/><rect x="10" y="9" width="1" height="1" fill="#FFFFFF"/><rect x="2" y="10" width="1" height="1" fill="#FFFFFF"/><rect x="3" y="10" width="1" height="1" fill="#FFFFFF"/><rect x="4" y="10" width="1" height="1" fill="#F1EFE2"/><rect x="5" y="10" width="1" height="1" fill="#F1EFE2"/><rect x="6" y="10" width="1" height="1" fill="#F1EFE2"/><rect x="7" y="10" width="1" height="1" fill="#F1EFE2"/><rect x="8" y="10" width="1" height="1" fill="#FFFFFF"/><rect x="9" y="10" width="1" height="1" fill="#FFFFFF"/><rect x="4" y="11" width="1" height="1" fill="#FFFFFF"/><rect x="5" y="11" width="1" height="1" fill="#FFFFFF"/><rect x="6" y="11" width="1" height="1" fill="#FFFFFF"/><rect x="7" y="11" width="1" height="1" fill="#FFFFFF"/></svg>
<span class="t" style="left:73.36px;top:327px;font-size:11px;font-weight:normal;color:#000;letter-spacing:-0.304px">Fixed End Points</span>
<span class="t" style="left:51.75px;top:376px;font-size:11px;font-weight:normal;color:#000;letter-spacing:-0.224px">High:</span>
<span class="t" style="left:51.61px;top:424px;font-size:11px;font-weight:normal;color:#000;letter-spacing:0.549px">Low:</span>
<div style="left:205px;top:371px;width:82px;height:21px;background:#ECE9D8;"></div>
<div style="left:205px;top:371px;width:81px;height:1px;background:#ACA899;"></div>
<div style="left:205px;top:371px;width:1px;height:20px;background:#ACA899;"></div>
<div style="left:206px;top:372px;width:79px;height:1px;background:#716F64;"></div>
<div style="left:206px;top:372px;width:1px;height:18px;background:#716F64;"></div>
<div style="left:205px;top:391px;width:82px;height:1px;background:#FFFFFF;"></div>
<div style="left:286px;top:371px;width:1px;height:21px;background:#FFFFFF;"></div>
<div style="left:206px;top:390px;width:80px;height:1px;background:#F1EFE2;"></div>
<div style="left:285px;top:372px;width:1px;height:19px;background:#F1EFE2;"></div>
<div style="left:205px;top:419px;width:82px;height:21px;background:#ECE9D8;"></div>
<div style="left:205px;top:419px;width:81px;height:1px;background:#ACA899;"></div>
<div style="left:205px;top:419px;width:1px;height:20px;background:#ACA899;"></div>
<div style="left:206px;top:420px;width:79px;height:1px;background:#716F64;"></div>
<div style="left:206px;top:420px;width:1px;height:18px;background:#716F64;"></div>
<div style="left:205px;top:439px;width:82px;height:1px;background:#FFFFFF;"></div>
<div style="left:286px;top:419px;width:1px;height:21px;background:#FFFFFF;"></div>
<div style="left:206px;top:438px;width:80px;height:1px;background:#F1EFE2;"></div>
<div style="left:285px;top:420px;width:1px;height:19px;background:#F1EFE2;"></div>
<span class="t" style="left:344.76px;top:177px;font-size:11px;font-weight:normal;color:#000;letter-spacing:-0.036px">Scale Type:</span>
<div style="left:498px;top:171px;width:82px;height:23px;background:#FFFFFF;"></div>
<div style="left:498px;top:171px;width:81px;height:1px;background:#ACA899;"></div>
<div style="left:498px;top:171px;width:1px;height:22px;background:#ACA899;"></div>
<div style="left:499px;top:172px;width:79px;height:1px;background:#716F64;"></div>
<div style="left:499px;top:172px;width:1px;height:20px;background:#716F64;"></div>
<div style="left:498px;top:193px;width:82px;height:1px;background:#FFFFFF;"></div>
<div style="left:579px;top:171px;width:1px;height:23px;background:#FFFFFF;"></div>
<div style="left:499px;top:192px;width:80px;height:1px;background:#F1EFE2;"></div>
<div style="left:578px;top:172px;width:1px;height:21px;background:#F1EFE2;"></div>
<span class="t" style="left:501.95px;top:177px;font-size:11px;font-weight:normal;color:#000;letter-spacing:0.015px">Linear</span>
<div style="left:559px;top:173px;width:19px;height:19px;background:#ECE9D8;"></div>
<div style="left:559px;top:173px;width:18px;height:1px;background:#F1EFE2;"></div>
<div style="left:559px;top:173px;width:1px;height:18px;background:#F1EFE2;"></div>
<div style="left:560px;top:174px;width:16px;height:1px;background:#FFFFFF;"></div>
<div style="left:560px;top:174px;width:1px;height:16px;background:#FFFFFF;"></div>
<div style="left:560px;top:190px;width:17px;height:1px;background:#ACA899;"></div>
<div style="left:576px;top:174px;width:1px;height:17px;background:#ACA899;"></div>
<div style="left:559px;top:191px;width:19px;height:1px;background:#716F64;"></div>
<div style="left:577px;top:173px;width:1px;height:19px;background:#716F64;"></div>
<div style="left:563px;top:180px;width:9px;height:1px;background:#716F64;"></div>
<div style="left:564px;top:181px;width:7px;height:1px;background:#716F64;"></div>
<div style="left:565px;top:182px;width:5px;height:1px;background:#716F64;"></div>
<div style="left:566px;top:183px;width:3px;height:1px;background:#716F64;"></div>
<div style="left:567px;top:184px;width:1px;height:1px;background:#716F64;"></div>
<svg style="position:absolute;left:349px;top:226px" width="12" height="12" shape-rendering="crispEdges"><rect x="4" y="0" width="1" height="1" fill="#ACA899"/><rect x="5" y="0" width="1" height="1" fill="#ACA899"/><rect x="6" y="0" width="1" height="1" fill="#ACA899"/><rect x="7" y="0" width="1" height="1" fill="#ACA899"/><rect x="2" y="1" width="1" height="1" fill="#ACA899"/><rect x="3" y="1" width="1" height="1" fill="#ACA899"/><rect x="4" y="1" width="1" height="1" fill="#716F64"/><rect x="5" y="1" width="1" height="1" fill="#716F64"/><rect x="6" y="1" width="1" height="1" fill="#716F64"/><rect x="7" y="1" width="1" height="1" fill="#716F64"/><rect x="8" y="1" width="1" height="1" fill="#ACA899"/><rect x="9" y="1" width="1" height="1" fill="#ACA899"/><rect x="1" y="2" width="1" height="1" fill="#ACA899"/><rect x="2" y="2" width="1" height="1" fill="#716F64"/><rect x="3" y="2" width="1" height="1" fill="#716F64"/><rect x="4" y="2" width="1" height="1" fill="#FFFFFF"/><rect x="5" y="2" width="1" height="1" fill="#FFFFFF"/><rect x="6" y="2" width="1" height="1" fill="#FFFFFF"/><rect x="7" y="2" width="1" height="1" fill="#FFFFFF"/><rect x="8" y="2" width="1" height="1" fill="#716F64"/><rect x="9" y="2" width="1" height="1" fill="#716F64"/><rect x="10" y="2" width="1" height="1" fill="#FFFFFF"/><rect x="1" y="3" width="1" height="1" fill="#ACA899"/><rect x="2" y="3" width="1" height="1" fill="#716F64"/><rect x="3" y="3" width="1" height="1" fill="#FFFFFF"/><rect x="4" y="3" width="1" height="1" fill="#FFFFFF"/><rect x="5" y="3" width="1" height="1" fill="#FFFFFF"/><rect x="6" y="3" width="1" height="1" fill="#FFFFFF"/><rect x="7" y="3" width="1" height="1" fill="#FFFFFF"/><rect x="8" y="3" width="1" height="1" fill="#FFFFFF"/><rect x="9" y="3" width="1" height="1" fill="#F1EFE2"/><rect x="10" y="3" width="1" height="1" fill="#FFFFFF"/><rect x="0" y="4" width="1" height="1" fill="#ACA899"/><rect x="1" y="4" width="1" height="1" fill="#716F64"/><rect x="2" y="4" width="1" height="1" fill="#FFFFFF"/><rect x="3" y="4" width="1" height="1" fill="#FFFFFF"/><rect x="4" y="4" width="1" height="1" fill="#FFFFFF"/><rect x="5" y="4" width="1" height="1" fill="#FFFFFF"/><rect x="6" y="4" width="1" height="1" fill="#FFFFFF"/><rect x="7" y="4" width="1" height="1" fill="#FFFFFF"/><rect x="8" y="4" width="1" height="1" fill="#FFFFFF"/><rect x="9" y="4" width="1" height="1" fill="#FFFFFF"/><rect x="10" y="4" width="1" height="1" fill="#F1EFE2"/><rect x="11" y="4" width="1" height="1" fill="#FFFFFF"/><rect x="0" y="5" width="1" height="1" fill="#ACA899"/><rect x="1" y="5" width="1" height="1" fill="#716F64"/><rect x="2" y="5" width="1" height="1" fill="#FFFFFF"/><rect x="3" y="5" width="1" height="1" fill="#FFFFFF"/><rect x="4" y="5" width="1" height="1" fill="#FFFFFF"/><rect x="5" y="5" width="1" height="1" fill="#FFFFFF"/><rect x="6" y="5" width="1" height="1" fill="#FFFFFF"/><rect x="7" y="5" width="1" height="1" fill="#FFFFFF"/><rect x="8" y="5" width="1" height="1" fill="#FFFFFF"/><rect x="9" y="5" width="1" height="1" fill="#FFFFFF"/><rect x="10" y="5" width="1" height="1" fill="#F1EFE2"/><rect x="11" y="5" width="1" height="1" fill="#FFFFFF"/><rect x="0" y="6" width="1" height="1" fill="#ACA899"/><rect x="1" y="6" width="1" height="1" fill="#716F64"/><rect x="2" y="6" width="1" height="1" fill="#FFFFFF"/><rect x="3" y="6" width="1" height="1" fill="#FFFFFF"/><rect x="4" y="6" width="1" height="1" fill="#FFFFFF"/><rect x="5" y="6" width="1" height="1" fill="#FFFFFF"/><rect x="6" y="6" width="1" height="1" fill="#FFFFFF"/><rect x="7" y="6" width="1" height="1" fill="#FFFFFF"/><rect x="8" y="6" width="1" height="1" fill="#FFFFFF"/><rect x="9" y="6" width="1" height="1" fill="#FFFFFF"/><rect x="10" y="6" width="1" height="1" fill="#F1EFE2"/><rect x="11" y="6" width="1" height="1" fill="#FFFFFF"/><rect x="0" y="7" width="1" height="1" fill="#ACA899"/><rect x="1" y="7" width="1" height="1" fill="#716F64"/><rect x="2" y="7" width="1" height="1" fill="#FFFFFF"/><rect x="3" y="7" width="1" height="1" fill="#FFFFFF"/><rect x="4" y="7" width="1" height="1" fill="#FFFFFF"/><rect x="5" y="7" width="1" height="1" fill="#FFFFFF"/><rect x="6" y="7" width="1" height="1" fill="#FFFFFF"/><rect x="7" y="7" width="1" height="1" fill="#FFFFFF"/><rect x="8" y="7" width="1" height="1" fill="#FFFFFF"/><rect x="9" y="7" width="1" height="1" fill="#FFFFFF"/><rect x="10" y="7" width="1" height="1" fill="#F1EFE2"/><rect x="11" y="7" width="1" height="1" fill="#FFFFFF"/><rect x="1" y="8" width="1" height="1" fill="#ACA899"/><rect x="2" y="8" width="1" height="1" fill="#716F64"/><rect x="3" y="8" width="1" height="1" fill="#FFFFFF"/><rect x="4" y="8" width="1" height="1" fill="#FFFFFF"/><rect x="5" y="8" width="1" height="1" fill="#FFFFFF"/><rect x="6" y="8" width="1" height="1" fill="#FFFFFF"/><rect x="7" y="8" width="1" height="1" fill="#FFFFFF"/><rect x="8" y="8" width="1" height="1" fill="#FFFFFF"/><rect x="9" y="8" width="1" height="1" fill="#F1EFE2"/><rect x="10" y="8" width="1" height="1" fill="#FFFFFF"/><rect x="1" y="9" width="1" height="1" fill="#ACA899"/><rect x="2" y="9" width="1" height="1" fill="#F1EFE2"/><rect x="3" y="9" width="1" height="1" fill="#F1EFE2"/><rect x="4" y="9" width="1" height="1" fill="#FFFFFF"/><rect x="5" y="9" width="1" height="1" fill="#FFFFFF"/><rect x="6" y="9" width="1" height="1" fill="#FFFFFF"/><rect x="7" y="9" width="1" height="1" fill="#FFFFFF"/><rect x="8" y="9" width="1" height="1" fill="#F1EFE2"/><rect x="9" y="9" width="1" height="1" fill="#F1EFE2"/><rect x="10" y="9" width="1" height="1" fill="#FFFFFF"/><rect x="2" y="10" width="1" height="1" fill="#FFFFFF"/><rect x="3" y="10" width="1" height="1" fill="#FFFFFF"/><rect x="4" y="10" width="1" height="1" fill="#F1EFE2"/><rect x="5" y="10" width="1" height="1" fill="#F1EFE2"/><rect x="6" y="10" width="1" height="1" fill="#F1EFE2"/><rect x="7" y="10" width="1" height="1" fill="#F1EFE2"/><rect x="8" y="10" width="1" height="1" fill="#FFFFFF"/><rect x="9" y="10" width="1" height="1" fill="#FFFFFF"/><rect x="4" y="11" width="1" height="1" fill="#FFFFFF"/><rect x="5" y="11" width="1" height="1" fill="#FFFFFF"/><rect x="6" y="11" width="1" height="1" fill="#FFFFFF"/><rect x="7" y="11" width="1" height="1" fill="#FFFFFF"/><rect x="5" y="4" width="1" height="1" fill="#000"/><rect x="6" y="4" width="1" height="1" fill="#000"/><rect x="4" y="5" width="1" height="1" fill="#000"/><rect x="5" y="5" width="1" height="1" fill="#000"/><rect x="6" y="5" width="1" height="1" fill="#000"/><rect x="7" y="5" width="1" height="1" fill="#000"/><rect x="4" y="6" width="1" height="1" fill="#000"/><rect x="5" y="6" width="1" height="1" fill="#000"/><rect x="6" y="6" width="1" height="1" fill="#000"/><rect x="7" y="6" width="1" height="1" fill="#000"/><rect x="5" y="7" width="1" height="1" fill="#000"/><rect x="6" y="7" width="1" height="1" fill="#000"/></svg>
<span class="t" style="left:365.95px;top:227px;font-size:11px;font-weight:normal;color:#000;letter-spacing:-0.223px">Min/Max Scaling</span>
<svg style="position:absolute;left:349px;top:276px" width="12" height="12" shape-rendering="crispEdges"><rect x="4" y="0" width="1" height="1" fill="#ACA899"/><rect x="5" y="0" width="1" height="1" fill="#ACA899"/><rect x="6" y="0" width="1" height="1" fill="#ACA899"/><rect x="7" y="0" width="1" height="1" fill="#ACA899"/><rect x="2" y="1" width="1" height="1" fill="#ACA899"/><rect x="3" y="1" width="1" height="1" fill="#ACA899"/><rect x="4" y="1" width="1" height="1" fill="#716F64"/><rect x="5" y="1" width="1" height="1" fill="#716F64"/><rect x="6" y="1" width="1" height="1" fill="#716F64"/><rect x="7" y="1" width="1" height="1" fill="#716F64"/><rect x="8" y="1" width="1" height="1" fill="#ACA899"/><rect x="9" y="1" width="1" height="1" fill="#ACA899"/><rect x="1" y="2" width="1" height="1" fill="#ACA899"/><rect x="2" y="2" width="1" height="1" fill="#716F64"/><rect x="3" y="2" width="1" height="1" fill="#716F64"/><rect x="4" y="2" width="1" height="1" fill="#FFFFFF"/><rect x="5" y="2" width="1" height="1" fill="#FFFFFF"/><rect x="6" y="2" width="1" height="1" fill="#FFFFFF"/><rect x="7" y="2" width="1" height="1" fill="#FFFFFF"/><rect x="8" y="2" width="1" height="1" fill="#716F64"/><rect x="9" y="2" width="1" height="1" fill="#716F64"/><rect x="10" y="2" width="1" height="1" fill="#FFFFFF"/><rect x="1" y="3" width="1" height="1" fill="#ACA899"/><rect x="2" y="3" width="1" height="1" fill="#716F64"/><rect x="3" y="3" width="1" height="1" fill="#FFFFFF"/><rect x="4" y="3" width="1" height="1" fill="#FFFFFF"/><rect x="5" y="3" width="1" height="1" fill="#FFFFFF"/><rect x="6" y="3" width="1" height="1" fill="#FFFFFF"/><rect x="7" y="3" width="1" height="1" fill="#FFFFFF"/><rect x="8" y="3" width="1" height="1" fill="#FFFFFF"/><rect x="9" y="3" width="1" height="1" fill="#F1EFE2"/><rect x="10" y="3" width="1" height="1" fill="#FFFFFF"/><rect x="0" y="4" width="1" height="1" fill="#ACA899"/><rect x="1" y="4" width="1" height="1" fill="#716F64"/><rect x="2" y="4" width="1" height="1" fill="#FFFFFF"/><rect x="3" y="4" width="1" height="1" fill="#FFFFFF"/><rect x="4" y="4" width="1" height="1" fill="#FFFFFF"/><rect x="5" y="4" width="1" height="1" fill="#FFFFFF"/><rect x="6" y="4" width="1" height="1" fill="#FFFFFF"/><rect x="7" y="4" width="1" height="1" fill="#FFFFFF"/><rect x="8" y="4" width="1" height="1" fill="#FFFFFF"/><rect x="9" y="4" width="1" height="1" fill="#FFFFFF"/><rect x="10" y="4" width="1" height="1" fill="#F1EFE2"/><rect x="11" y="4" width="1" height="1" fill="#FFFFFF"/><rect x="0" y="5" width="1" height="1" fill="#ACA899"/><rect x="1" y="5" width="1" height="1" fill="#716F64"/><rect x="2" y="5" width="1" height="1" fill="#FFFFFF"/><rect x="3" y="5" width="1" height="1" fill="#FFFFFF"/><rect x="4" y="5" width="1" height="1" fill="#FFFFFF"/><rect x="5" y="5" width="1" height="1" fill="#FFFFFF"/><rect x="6" y="5" width="1" height="1" fill="#FFFFFF"/><rect x="7" y="5" width="1" height="1" fill="#FFFFFF"/><rect x="8" y="5" width="1" height="1" fill="#FFFFFF"/><rect x="9" y="5" width="1" height="1" fill="#FFFFFF"/><rect x="10" y="5" width="1" height="1" fill="#F1EFE2"/><rect x="11" y="5" width="1" height="1" fill="#FFFFFF"/><rect x="0" y="6" width="1" height="1" fill="#ACA899"/><rect x="1" y="6" width="1" height="1" fill="#716F64"/><rect x="2" y="6" width="1" height="1" fill="#FFFFFF"/><rect x="3" y="6" width="1" height="1" fill="#FFFFFF"/><rect x="4" y="6" width="1" height="1" fill="#FFFFFF"/><rect x="5" y="6" width="1" height="1" fill="#FFFFFF"/><rect x="6" y="6" width="1" height="1" fill="#FFFFFF"/><rect x="7" y="6" width="1" height="1" fill="#FFFFFF"/><rect x="8" y="6" width="1" height="1" fill="#FFFFFF"/><rect x="9" y="6" width="1" height="1" fill="#FFFFFF"/><rect x="10" y="6" width="1" height="1" fill="#F1EFE2"/><rect x="11" y="6" width="1" height="1" fill="#FFFFFF"/><rect x="0" y="7" width="1" height="1" fill="#ACA899"/><rect x="1" y="7" width="1" height="1" fill="#716F64"/><rect x="2" y="7" width="1" height="1" fill="#FFFFFF"/><rect x="3" y="7" width="1" height="1" fill="#FFFFFF"/><rect x="4" y="7" width="1" height="1" fill="#FFFFFF"/><rect x="5" y="7" width="1" height="1" fill="#FFFFFF"/><rect x="6" y="7" width="1" height="1" fill="#FFFFFF"/><rect x="7" y="7" width="1" height="1" fill="#FFFFFF"/><rect x="8" y="7" width="1" height="1" fill="#FFFFFF"/><rect x="9" y="7" width="1" height="1" fill="#FFFFFF"/><rect x="10" y="7" width="1" height="1" fill="#F1EFE2"/><rect x="11" y="7" width="1" height="1" fill="#FFFFFF"/><rect x="1" y="8" width="1" height="1" fill="#ACA899"/><rect x="2" y="8" width="1" height="1" fill="#716F64"/><rect x="3" y="8" width="1" height="1" fill="#FFFFFF"/><rect x="4" y="8" width="1" height="1" fill="#FFFFFF"/><rect x="5" y="8" width="1" height="1" fill="#FFFFFF"/><rect x="6" y="8" width="1" height="1" fill="#FFFFFF"/><rect x="7" y="8" width="1" height="1" fill="#FFFFFF"/><rect x="8" y="8" width="1" height="1" fill="#FFFFFF"/><rect x="9" y="8" width="1" height="1" fill="#F1EFE2"/><rect x="10" y="8" width="1" height="1" fill="#FFFFFF"/><rect x="1" y="9" width="1" height="1" fill="#ACA899"/><rect x="2" y="9" width="1" height="1" fill="#F1EFE2"/><rect x="3" y="9" width="1" height="1" fill="#F1EFE2"/><rect x="4" y="9" width="1" height="1" fill="#FFFFFF"/><rect x="5" y="9" width="1" height="1" fill="#FFFFFF"/><rect x="6" y="9" width="1" height="1" fill="#FFFFFF"/><rect x="7" y="9" width="1" height="1" fill="#FFFFFF"/><rect x="8" y="9" width="1" height="1" fill="#F1EFE2"/><rect x="9" y="9" width="1" height="1" fill="#F1EFE2"/><rect x="10" y="9" width="1" height="1" fill="#FFFFFF"/><rect x="2" y="10" width="1" height="1" fill="#FFFFFF"/><rect x="3" y="10" width="1" height="1" fill="#FFFFFF"/><rect x="4" y="10" width="1" height="1" fill="#F1EFE2"/><rect x="5" y="10" width="1" height="1" fill="#F1EFE2"/><rect x="6" y="10" width="1" height="1" fill="#F1EFE2"/><rect x="7" y="10" width="1" height="1" fill="#F1EFE2"/><rect x="8" y="10" width="1" height="1" fill="#FFFFFF"/><rect x="9" y="10" width="1" height="1" fill="#FFFFFF"/><rect x="4" y="11" width="1" height="1" fill="#FFFFFF"/><rect x="5" y="11" width="1" height="1" fill="#FFFFFF"/><rect x="6" y="11" width="1" height="1" fill="#FFFFFF"/><rect x="7" y="11" width="1" height="1" fill="#FFFFFF"/></svg>
<span class="t" style="left:366.07px;top:277px;font-size:11px;font-weight:normal;color:#000;letter-spacing:0.04px">Auto Scale to View Port</span>
<svg style="position:absolute;left:349px;top:326px" width="12" height="12" shape-rendering="crispEdges"><rect x="4" y="0" width="1" height="1" fill="#ACA899"/><rect x="5" y="0" width="1" height="1" fill="#ACA899"/><rect x="6" y="0" width="1" height="1" fill="#ACA899"/><rect x="7" y="0" width="1" height="1" fill="#ACA899"/><rect x="2" y="1" width="1" height="1" fill="#ACA899"/><rect x="3" y="1" width="1" height="1" fill="#ACA899"/><rect x="4" y="1" width="1" height="1" fill="#716F64"/><rect x="5" y="1" width="1" height="1" fill="#716F64"/><rect x="6" y="1" width="1" height="1" fill="#716F64"/><rect x="7" y="1" width="1" height="1" fill="#716F64"/><rect x="8" y="1" width="1" height="1" fill="#ACA899"/><rect x="9" y="1" width="1" height="1" fill="#ACA899"/><rect x="1" y="2" width="1" height="1" fill="#ACA899"/><rect x="2" y="2" width="1" height="1" fill="#716F64"/><rect x="3" y="2" width="1" height="1" fill="#716F64"/><rect x="4" y="2" width="1" height="1" fill="#FFFFFF"/><rect x="5" y="2" width="1" height="1" fill="#FFFFFF"/><rect x="6" y="2" width="1" height="1" fill="#FFFFFF"/><rect x="7" y="2" width="1" height="1" fill="#FFFFFF"/><rect x="8" y="2" width="1" height="1" fill="#716F64"/><rect x="9" y="2" width="1" height="1" fill="#716F64"/><rect x="10" y="2" width="1" height="1" fill="#FFFFFF"/><rect x="1" y="3" width="1" height="1" fill="#ACA899"/><rect x="2" y="3" width="1" height="1" fill="#716F64"/><rect x="3" y="3" width="1" height="1" fill="#FFFFFF"/><rect x="4" y="3" width="1" height="1" fill="#FFFFFF"/><rect x="5" y="3" width="1" height="1" fill="#FFFFFF"/><rect x="6" y="3" width="1" height="1" fill="#FFFFFF"/><rect x="7" y="3" width="1" height="1" fill="#FFFFFF"/><rect x="8" y="3" width="1" height="1" fill="#FFFFFF"/><rect x="9" y="3" width="1" height="1" fill="#F1EFE2"/><rect x="10" y="3" width="1" height="1" fill="#FFFFFF"/><rect x="0" y="4" width="1" height="1" fill="#ACA899"/><rect x="1" y="4" width="1" height="1" fill="#716F64"/><rect x="2" y="4" width="1" height="1" fill="#FFFFFF"/><rect x="3" y="4" width="1" height="1" fill="#FFFFFF"/><rect x="4" y="4" width="1" height="1" fill="#FFFFFF"/><rect x="5" y="4" width="1" height="1" fill="#FFFFFF"/><rect x="6" y="4" width="1" height="1" fill="#FFFFFF"/><rect x="7" y="4" width="1" height="1" fill="#FFFFFF"/><rect x="8" y="4" width="1" height="1" fill="#FFFFFF"/><rect x="9" y="4" width="1" height="1" fill="#FFFFFF"/><rect x="10" y="4" width="1" height="1" fill="#F1EFE2"/><rect x="11" y="4" width="1" height="1" fill="#FFFFFF"/><rect x="0" y="5" width="1" height="1" fill="#ACA899"/><rect x="1" y="5" width="1" height="1" fill="#716F64"/><rect x="2" y="5" width="1" height="1" fill="#FFFFFF"/><rect x="3" y="5" width="1" height="1" fill="#FFFFFF"/><rect x="4" y="5" width="1" height="1" fill="#FFFFFF"/><rect x="5" y="5" width="1" height="1" fill="#FFFFFF"/><rect x="6" y="5" width="1" height="1" fill="#FFFFFF"/><rect x="7" y="5" width="1" height="1" fill="#FFFFFF"/><rect x="8" y="5" width="1" height="1" fill="#FFFFFF"/><rect x="9" y="5" width="1" height="1" fill="#FFFFFF"/><rect x="10" y="5" width="1" height="1" fill="#F1EFE2"/><rect x="11" y="5" width="1" height="1" fill="#FFFFFF"/><rect x="0" y="6" width="1" height="1" fill="#ACA899"/><rect x="1" y="6" width="1" height="1" fill="#716F64"/><rect x="2" y="6" width="1" height="1" fill="#FFFFFF"/><rect x="3" y="6" width="1" height="1" fill="#FFFFFF"/><rect x="4" y="6" width="1" height="1" fill="#FFFFFF"/><rect x="5" y="6" width="1" height="1" fill="#FFFFFF"/><rect x="6" y="6" width="1" height="1" fill="#FFFFFF"/><rect x="7" y="6" width="1" height="1" fill="#FFFFFF"/><rect x="8" y="6" width="1" height="1" fill="#FFFFFF"/><rect x="9" y="6" width="1" height="1" fill="#FFFFFF"/><rect x="10" y="6" width="1" height="1" fill="#F1EFE2"/><rect x="11" y="6" width="1" height="1" fill="#FFFFFF"/><rect x="0" y="7" width="1" height="1" fill="#ACA899"/><rect x="1" y="7" width="1" height="1" fill="#716F64"/><rect x="2" y="7" width="1" height="1" fill="#FFFFFF"/><rect x="3" y="7" width="1" height="1" fill="#FFFFFF"/><rect x="4" y="7" width="1" height="1" fill="#FFFFFF"/><rect x="5" y="7" width="1" height="1" fill="#FFFFFF"/><rect x="6" y="7" width="1" height="1" fill="#FFFFFF"/><rect x="7" y="7" width="1" height="1" fill="#FFFFFF"/><rect x="8" y="7" width="1" height="1" fill="#FFFFFF"/><rect x="9" y="7" width="1" height="1" fill="#FFFFFF"/><rect x="10" y="7" width="1" height="1" fill="#F1EFE2"/><rect x="11" y="7" width="1" height="1" fill="#FFFFFF"/><rect x="1" y="8" width="1" height="1" fill="#ACA899"/><rect x="2" y="8" width="1" height="1" fill="#716F64"/><rect x="3" y="8" width="1" height="1" fill="#FFFFFF"/><rect x="4" y="8" width="1" height="1" fill="#FFFFFF"/><rect x="5" y="8" width="1" height="1" fill="#FFFFFF"/><rect x="6" y="8" width="1" height="1" fill="#FFFFFF"/><rect x="7" y="8" width="1" height="1" fill="#FFFFFF"/><rect x="8" y="8" width="1" height="1" fill="#FFFFFF"/><rect x="9" y="8" width="1" height="1" fill="#F1EFE2"/><rect x="10" y="8" width="1" height="1" fill="#FFFFFF"/><rect x="1" y="9" width="1" height="1" fill="#ACA899"/><rect x="2" y="9" width="1" height="1" fill="#F1EFE2"/><rect x="3" y="9" width="1" height="1" fill="#F1EFE2"/><rect x="4" y="9" width="1" height="1" fill="#FFFFFF"/><rect x="5" y="9" width="1" height="1" fill="#FFFFFF"/><rect x="6" y="9" width="1" height="1" fill="#FFFFFF"/><rect x="7" y="9" width="1" height="1" fill="#FFFFFF"/><rect x="8" y="9" width="1" height="1" fill="#F1EFE2"/><rect x="9" y="9" width="1" height="1" fill="#F1EFE2"/><rect x="10" y="9" width="1" height="1" fill="#FFFFFF"/><rect x="2" y="10" width="1" height="1" fill="#FFFFFF"/><rect x="3" y="10" width="1" height="1" fill="#FFFFFF"/><rect x="4" y="10" width="1" height="1" fill="#F1EFE2"/><rect x="5" y="10" width="1" height="1" fill="#F1EFE2"/><rect x="6" y="10" width="1" height="1" fill="#F1EFE2"/><rect x="7" y="10" width="1" height="1" fill="#F1EFE2"/><rect x="8" y="10" width="1" height="1" fill="#FFFFFF"/><rect x="9" y="10" width="1" height="1" fill="#FFFFFF"/><rect x="4" y="11" width="1" height="1" fill="#FFFFFF"/><rect x="5" y="11" width="1" height="1" fill="#FFFFFF"/><rect x="6" y="11" width="1" height="1" fill="#FFFFFF"/><rect x="7" y="11" width="1" height="1" fill="#FFFFFF"/></svg>
<span class="t" style="left:366.36px;top:327px;font-size:11px;font-weight:normal;color:#000;letter-spacing:-0.304px">Fixed End Points</span>
<span class="t" style="left:344.75px;top:376px;font-size:11px;font-weight:normal;color:#000;letter-spacing:-0.224px">High:</span>
<span class="t" style="left:344.61px;top:424px;font-size:11px;font-weight:normal;color:#000;letter-spacing:0.549px">Low:</span>
<div style="left:498px;top:371px;width:82px;height:21px;background:#ECE9D8;"></div>
<div style="left:498px;top:371px;width:81px;height:1px;background:#ACA899;"></div>
<div style="left:498px;top:371px;width:1px;height:20px;background:#ACA899;"></div>
<div style="left:499px;top:372px;width:79px;height:1px;background:#716F64;"></div>
<div style="left:499px;top:372px;width:1px;height:18px;background:#716F64;"></div>
<div style="left:498px;top:391px;width:82px;height:1px;background:#FFFFFF;"></div>
<div style="left:579px;top:371px;width:1px;height:21px;background:#FFFFFF;"></div>
<div style="left:499px;top:390px;width:80px;height:1px;background:#F1EFE2;"></div>
<div style="left:578px;top:372px;width:1px;height:19px;background:#F1EFE2;"></div>
<div style="left:498px;top:419px;width:82px;height:21px;background:#ECE9D8;"></div>
<div style="left:498px;top:419px;width:81px;height:1px;background:#ACA899;"></div>
<div style="left:498px;top:419px;width:1px;height:20px;background:#ACA899;"></div>
<div style="left:499px;top:420px;width:79px;height:1px;background:#716F64;"></div>
<div style="left:499px;top:420px;width:1px;height:18px;background:#716F64;"></div>
<div style="left:498px;top:439px;width:82px;height:1px;background:#FFFFFF;"></div>
<div style="left:579px;top:419px;width:1px;height:21px;background:#FFFFFF;"></div>
<div style="left:499px;top:438px;width:80px;height:1px;background:#F1EFE2;"></div>
<div style="left:578px;top:420px;width:1px;height:19px;background:#F1EFE2;"></div>
<div style="left:462px;top:487px;width:81px;height:27px;background:#ECE9D8;"></div>
<div style="left:462px;top:487px;width:80px;height:1px;background:#FFFFFF;"></div>
<div style="left:462px;top:487px;width:1px;height:26px;background:#FFFFFF;"></div>
<div style="left:463px;top:512px;width:79px;height:1px;background:#ACA899;"></div>
<div style="left:541px;top:488px;width:1px;height:25px;background:#ACA899;"></div>
<div style="left:462px;top:513px;width:81px;height:1px;background:#716F64;"></div>
<div style="left:542px;top:487px;width:1px;height:27px;background:#716F64;"></div>
<div style="left:547px;top:487px;width:81px;height:27px;background:#ECE9D8;"></div>
<div style="left:547px;top:487px;width:80px;height:1px;background:#FFFFFF;"></div>
<div style="left:547px;top:487px;width:1px;height:26px;background:#FFFFFF;"></div>
<div style="left:548px;top:512px;width:79px;height:1px;background:#ACA899;"></div>
<div style="left:626px;top:488px;width:1px;height:25px;background:#ACA899;"></div>
<div style="left:547px;top:513px;width:81px;height:1px;background:#716F64;"></div>
<div style="left:627px;top:487px;width:1px;height:27px;background:#716F64;"></div>
<span class="t" style="left:7px;top:10px;font-size:14px;color:#fff;text-shadow:0.6px 0 0 #fff, 1px 1px 0 #0A2D9A">Chart - Edit Configuration</span>
<span class="t" style="left:10.81px;top:37px;font-size:11px;font-weight:normal;color:#000;letter-spacing:-0.227px">Data</span>
<span class="t" style="left:43.81px;top:37px;font-size:11px;font-weight:normal;color:#000;letter-spacing:-0.169px">Data Options</span>
<span class="t" style="left:117.07px;top:37px;font-size:11px;font-weight:normal;color:#000;letter-spacing:-0.106px">Studies</span>
<span class="t" style="left:163.75px;top:37px;font-size:11px;font-weight:normal;color:#000;letter-spacing:-0.112px">Display</span>
<span class="t" style="left:209.99px;top:35px;font-size:11px;font-weight:normal;color:#000;letter-spacing:0.028px">Scale</span>
<span class="t" style="left:248.03px;top:37px;font-size:11px;font-weight:normal;color:#000;letter-spacing:-0.197px">Color</span>
<span class="t" style="left:283.62px;top:37px;font-size:11px;font-weight:normal;color:#000;letter-spacing:-0.275px">ISO Data Options</span>
<span class="t" style="left:376.81px;top:37px;font-size:11px;font-weight:normal;color:#000;letter-spacing:0.027px">Data Source</span>
<span class="t" style="left:20.95px;top:68px;font-size:11px;font-weight:normal;color:#000;letter-spacing:-0.009px">Horizontal</span>
<span class="t" style="left:80.0px;top:66px;font-size:11px;font-weight:normal;color:#000;letter-spacing:0.297px">Vertical</span>
<span class="t" style="left:21.85px;top:89px;font-size:11px;font-weight:normal;color:#000;letter-spacing:0.496px">Top</span>
<span class="t" style="left:25.72px;top:109px;font-size:11px;font-weight:normal;color:#000;letter-spacing:-0.073px">Scale Settings</span>
<span class="t" style="left:31.75px;top:130px;font-size:11px;font-weight:normal;color:#000;letter-spacing:0.382px">Left Axis</span>
<span class="t" style="left:324.82px;top:130px;font-size:11px;font-weight:normal;color:#000;letter-spacing:-0.021px">Right Axis</span>
<span class="t" style="left:496.4px;top:495px;font-size:11px;font-weight:normal;color:#000;letter-spacing:-0.3px">Ok</span>
<span class="t" style="left:571.2px;top:495px;font-size:11px;font-weight:normal;color:#000;letter-spacing:-0.05px">Cancel</span>
</body></html>
